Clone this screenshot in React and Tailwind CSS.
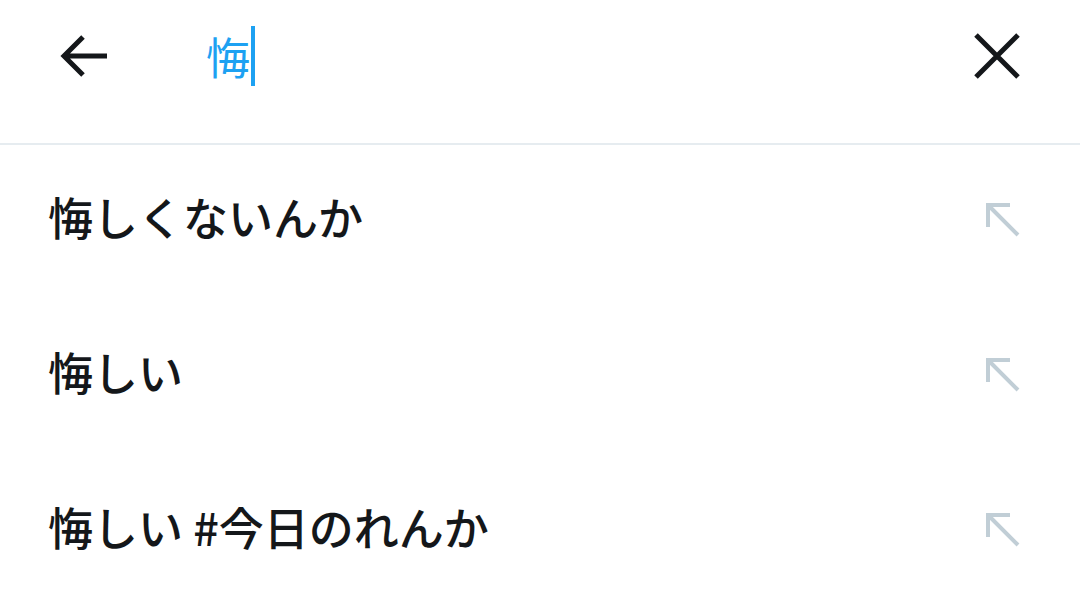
export default function App() {
  const rows = ["悔しくないんか", "悔しい", "悔しい #今日のれんか"];
  return (
    <div className="w-[1080px] h-[612px] bg-white overflow-hidden" style={{ fontFamily: '"Noto Sans CJK JP", "Noto Sans", sans-serif' }}>
      <div className="h-[145px] border-b-2 border-[#e6ecf0]">
        <div className="h-[111px] flex items-center">
          <div className="w-[60px]" />
          <svg width="48" height="48" viewBox="0 0 48 48" className="shrink-0">
            <path d="M47 24H5M23 5L4 24l19 19" fill="none" stroke="#14171a" strokeWidth="5" strokeLinecap="butt" strokeLinejoin="miter" />
          </svg>
          <div className="w-[98px]" />
          <div className="flex items-center text-[44px] leading-none text-[#1da1f2]">
            <span>悔</span>
            <span className="w-[4px] h-[60px] bg-[#1da1f2] ml-[1px]" />
          </div>
          <div className="flex-1" />
          <svg width="46" height="46" viewBox="0 0 46 46" className="shrink-0 mr-[60px]">
            <path d="M2 2L44 44M44 2L2 44" fill="none" stroke="#14171a" strokeWidth="5" />
          </svg>
        </div>
      </div>
      {rows.map((r) => (
        <div key={r} className="h-[155px] flex items-center pl-[48px] pr-[60px] -mt-[6px] mb-[6px]">
          <span className="text-[45px] font-medium leading-none text-[#14171a] flex-1">{r}</span>
          <svg width="36" height="36" viewBox="0 0 36 36" className="shrink-0 mt-[4px]">
            <path d="M34 34L4 4M2 4H26M4 2V26" fill="none" stroke="#c1ced6" strokeWidth="4" />
          </svg>
        </div>
      ))}
    </div>
  );
}
